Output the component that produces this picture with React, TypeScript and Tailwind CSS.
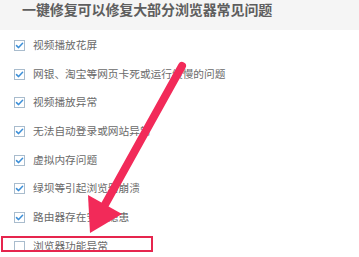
const items = [
  { label: "视频播放花屏", checked: true },
  { label: "网银、淘宝等网页卡死或运行缓慢的问题", checked: true },
  { label: "视频播放异常", checked: true },
  { label: "无法自动登录或网站异常", checked: true },
  { label: "虚拟内存问题", checked: true },
  { label: "绿坝等引起浏览器崩溃", checked: true },
  { label: "路由器存在安全隐患", checked: true },
  { label: "浏览器功能异常", checked: false },
];

function Box({ checked }: { checked: boolean }) {
  return (
    <span className="flex h-[11px] w-[11px] shrink-0 items-center justify-center border border-[#a9bccd] bg-white">
      {checked ? (
        <svg width="9" height="9" viewBox="0 0 9 9" fill="none">
          <path d="M1.5 4.6 L3.6 6.6 L7.6 2.2" stroke="#3c8fd8" strokeWidth="1.5" strokeLinecap="round" strokeLinejoin="round" />
        </svg>
      ) : null}
    </span>
  );
}

export default function App() {
  return (
    <div
      className="relative h-[257px] w-[359px] overflow-hidden bg-white"
      style={{ fontFamily: '"Noto Sans CJK SC", "Noto Sans", sans-serif' }}
    >
      <div className="h-[30px] bg-[#f5f5f5] pl-[22px] pt-[1px]">
        <h1 className="text-[14px] font-bold leading-[16px] tracking-[-0.1px] text-[#5e5e5e]">
          一键修复可以修复大部分浏览器常见问题
        </h1>
      </div>

      <ul className="pt-[1px]">
        {items.map((it) => (
          <li key={it.label} className="flex h-[28.7px] items-center gap-[8px] pl-[14px]">
            <Box checked={it.checked} />
            <span className="text-[10.7px] leading-none text-[#6a6a6a]">{it.label}</span>
          </li>
        ))}
      </ul>

      {/* highlight box */}
      <div className="absolute left-[1px] top-[236px] h-[16px] w-[152px] border-[2.5px] border-[#e6254e]" />

      {/* arrow */}
      <svg className="absolute left-0 top-0" width="359" height="257" viewBox="0 0 359 257">
        <line x1="182" y1="66" x2="102" y2="210" stroke="#f22a59" strokeWidth="8" strokeLinecap="round" />
        <polygon points="90,233 88,195 122,214" fill="#f22a59" />
      </svg>
    </div>
  );
}
